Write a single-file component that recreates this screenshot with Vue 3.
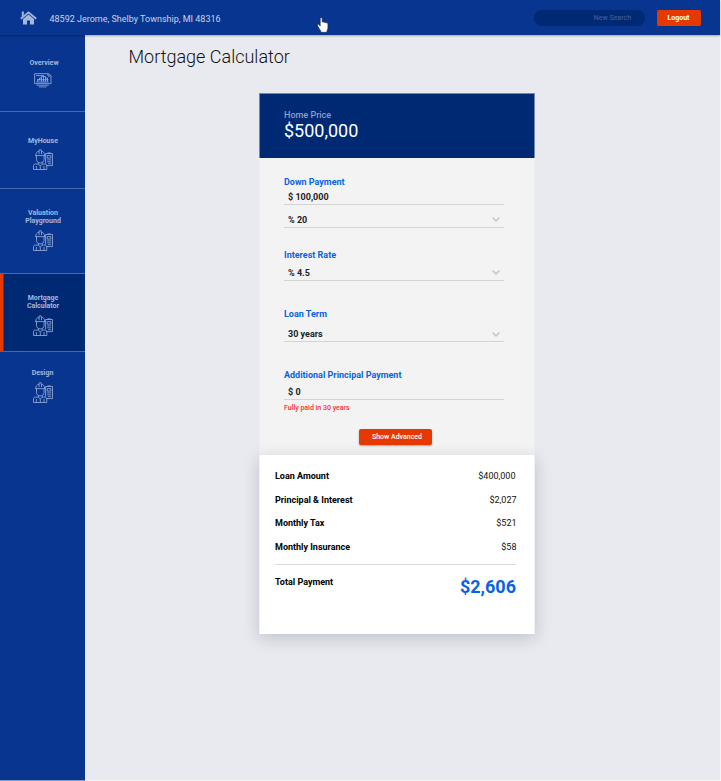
<script setup>
const navItems = [
  { key: 'overview', lines: ['Overview'], icon: 'plan' },
  { key: 'myhouse', lines: ['MyHouse'], icon: 'worker' },
  { key: 'valuation', lines: ['Valuation', 'Playground'], icon: 'worker' },
  { key: 'mortgage', lines: ['Mortgage', 'Calculator'], icon: 'worker', active: true },
  { key: 'design', lines: ['Design'], icon: 'worker' },
]

const summary = [
  { key: 'loan', label: 'Loan Amount', value: '$400,000' },
  { key: 'interest', label: 'Principal & Interest', value: '$2,027' },
  { key: 'tax', label: 'Monthly Tax', value: '$521' },
  { key: 'insurance', label: 'Monthly Insurance', value: '$58' },
]
</script>

<template>
  <div class="page">
    <header class="topbar">
      <svg class="home" viewBox="0 0 17 14">
        <path d="M0.2 7.1 8.5 0.3 16.8 7.1 15.6 8.4 8.5 2.6 1.4 8.4z" />
        <path d="M1.8.6h2v3.500l-2 1.600z" />
        <path d="M8.5 3.6 14 8.1v5.5h-4V9.4H7v4.2H3V8.1z" />
      </svg>
      <span class="address">48592 Jerome, Shelby Township, MI 48316</span>
      <div class="search">New Search</div>
      <button class="logout">Logout</button>
      <svg class="pointer" viewBox="0 0 12 16">
        <path
          d="M3.2 9V1.7C3.2.3 5.2.3 5.2 1.7v3.4c.7-.5 1.6-.3 1.9.4.7-.4 1.5-.1 1.8.5 1-.4 2 .1 2 1.3v3.4c0 1.5-.9 2.4-1.1 4.6H4.1C3.8 13.5 1.6 11.2.6 8.6.2 7.3 1.5 6.7 2.2 7.7z"
        />
      </svg>
    </header>

    <div class="body">
      <nav class="sidebar">
        <a
          v-for="item in navItems"
          :key="item.key"
          class="nav-item"
          :class="[item.key, { active: item.active }]"
        >
          <span class="nav-label">
            <span v-for="line in item.lines" :key="line">{{ line }}</span>
          </span>
          <svg v-if="item.icon === 'plan'" class="plan-icon" viewBox="0 0 18 15">
            <path d="M.6 10.600V.700h13.800l2.600 2v7.900z" />
            <path d="M14 .8v2.300h2.500M2 2.600h8M2.400 9h12.300M3.500 8.500V6.800h2V5h2v3.500M7.500 5V3.500h4v5M9.500 3.500v5M11.500 5h2v3.500M3 6.800h11.500" />
            <path d="M2.5 12.200h12.300M4.800 13.900h7.800" />
          </svg>
          <svg v-else class="worker-icon" viewBox="0 0 20 21">
            <path d="M2 6.600h10.500M2.800 6.500C2.800 3.900 4.100 2.500 6 2.100L6.400.8h1.700l.3 1.300c1.900.4 3.300 1.800 3.300 4.400M6.100 2v3.200M8.500 2v3.200" />
            <path d="M3.500 6.800v3.600c0 2.100 1.600 3.500 3.800 3.500s3.800-1.400 3.800-3.500V6.800" />
            <path d="M5.400 13.500v1.600H2.300C1 15.100.5 15.900.5 17v3.500h13.300V17c0-1.100-.5-1.900-1.800-1.900H9.200v-1.600M5.400 15.100l1.900 2 1.900-2M7.300 17.100v3.400M3.400 17v3.500M11 17v3.500" />
            <path d="M12.600 4.500h6.900v12.100h-6.300M12.600 4.500v10M14.500 3.900h3.200M14.200 6.600h3.600v2.500h-3.600zM14.200 10.900h4M14.200 12.800h4M15 14.700h3.200" />
          </svg>
        </a>
      </nav>

      <main class="content">
        <h1 class="title">Mortgage Calculator</h1>

        <section class="card">
          <div class="price">
            <div class="price-label">Home Price</div>
            <div class="price-value">$500,000</div>
          </div>

          <div class="form">
            <div class="group down">
              <label class="label">Down Payment</label>
              <div class="field">$ 100,000</div>
              <div class="field second">
                <span>% 20</span>
                <svg class="chevron" viewBox="0 0 8 5"><path d="M.6.6 4 4 7.4.6" /></svg>
              </div>
            </div>
            <div class="group rate">
              <label class="label">Interest Rate</label>
              <div class="field">
                <span>% 4.5</span>
                <svg class="chevron" viewBox="0 0 8 5"><path d="M.6.6 4 4 7.4.6" /></svg>
              </div>
            </div>
            <div class="group term">
              <label class="label">Loan Term</label>
              <div class="field">
                <span>30 years</span>
                <svg class="chevron" viewBox="0 0 8 5"><path d="M.6.6 4 4 7.4.6" /></svg>
              </div>
            </div>
            <div class="group extra">
              <label class="label">Additional Principal Payment</label>
              <div class="field">$ 0</div>
              <div class="note">Fully paid in 30 years</div>
            </div>
            <button class="advanced">Show Advanced</button>
          </div>

          <div class="summary">
            <div v-for="row in summary" :key="row.key" class="row">
              <span class="row-label">{{ row.label }}</span>
              <span class="row-value" :class="row.key">{{ row.value }}</span>
            </div>
            <div class="total">
              <span class="row-label">Total Payment</span>
              <span class="total-value">$2,606</span>
            </div>
          </div>
        </section>
      </main>
    </div>
  </div>
</template>

<style>
body {
  background: #f5f6f9;
}
</style>

<style scoped>
* {
  box-sizing: border-box;
}
.page {
  width: 720px;
  height: 781px;
  display: flex;
  flex-direction: column;
  font-family: Roboto, 'Liberation Sans', sans-serif;
  background: #e9eaef;
}
button {
  border: 0;
  padding: 0;
  font-family: inherit;
  color: #fff;
  background: #e63900;
  border-radius: 2px;
}
.topbar {
  position: relative;
  z-index: 2;
  flex: none;
  height: 35px;
  display: flex;
  align-items: center;
  padding-left: 20px;
  background: #08358f;
  box-shadow: 0 1px 2px rgba(0, 0, 0, 0.3);
}
.home {
  width: 17px;
  height: 14px;
  fill: #a5b7dc;
}
.address {
  margin: 2px 0 0 12.5px;
  font-size: 9px;
  line-height: 14px;
  white-space: nowrap;
  color: #c8d3ea;
}
.search {
  width: 111px;
  height: 16px;
  margin-left: auto;
  padding-right: 14px;
  border-radius: 8px;
  background: #002974;
  color: #4563a0;
  font-size: 7px;
  line-height: 16px;
  text-align: right;
}
.logout {
  width: 44px;
  height: 16px;
  margin: 0 19.5px 0 11.5px;
  font-size: 7px;
  font-weight: 700;
  line-height: 16px;
}
.pointer {
  position: absolute;
  left: 317px;
  top: 17px;
  width: 12px;
  height: 16px;
  fill: #fff;
  stroke: #17274f;
  stroke-width: 0.6;
}
.body {
  flex: 1;
  display: flex;
}
.sidebar {
  width: 85px;
  flex: none;
  background: #08358f;
  border-bottom: 1px solid #839ac8;
}
.nav-item {
  display: flex;
  flex-direction: column;
  align-items: center;
  border-bottom: 1px solid #4769ac;
}
.nav-label {
  display: flex;
  flex-direction: column;
  align-items: center;
  font-size: 7px;
  font-weight: 700;
  line-height: 8px;
  color: #a5b7dc;
}
.overview {
  height: 77px;
  padding: 24px 0 0 3px;
}
.myhouse {
  height: 77px;
  padding: 25px 0 0 1px;
}
.valuation {
  height: 85px;
  padding: 20px 0 0 1px;
}
.mortgage {
  height: 78px;
  padding: 20px 0 0 1px;
}
.design {
  padding-top: 17px;
  border-bottom: 0;
}
.active {
  background: #002974;
  box-shadow: inset 3.5px 0 #e63900;
}
.plan-icon,
.worker-icon {
  fill: none;
  stroke: #a5b7dc;
}
.plan-icon {
  width: 18px;
  height: 15px;
  margin: 6px 2px 0 0;
  stroke-width: 0.75;
}
.worker-icon {
  width: 20px;
  height: 21px;
  margin-top: 5px;
  stroke-width: 0.75;
}
.myhouse .worker-icon {
  margin-top: 4px;
}
.design .worker-icon {
  margin: 5px 0 0 1px;
}
.content {
  flex: 1;
  border-bottom: 1px solid #f4f5f7;
}
.title {
  margin: 8px 0 0 43.5px;
  font-size: 18px;
  font-weight: 300;
  line-height: 27px;
  color: #111;
}
.card {
  width: 276px;
  margin: 23px 0 0 174px;
}
.price {
  height: 65px;
  padding: 15px 0 0 24px;
  background: #002974;
  border: 1px solid #7485ae;
  border-bottom: 0;
}
.price-label {
  font-size: 9px;
  font-weight: 500;
  line-height: 12px;
  color: #8f9fc5;
}
.price-value {
  font-size: 18px;
  line-height: 20px;
  color: #fff;
}
.form {
  height: 297px;
  padding: 17px 30px 0 24px;
  background: #f3f3f3;
  border: solid #eeeff1;
  border-width: 0 1px;
}
.group {
  display: flex;
  flex-direction: column;
}
.down {
  height: 73.5px;
}
.rate {
  height: 59.5px;
}
.term {
  height: 61px;
}
.extra {
  height: 59px;
}
.label {
  font-size: 9px;
  font-weight: 700;
  line-height: 13px;
  color: #0863e3;
}
.down .label {
  padding-top: 1px;
  margin-bottom: -1px;
}
.field {
  display: flex;
  align-items: center;
  justify-content: space-between;
  height: 17px;
  padding: 1px 4px 0;
  border-bottom: 1px solid #d4d4d4;
  font-size: 9px;
  font-weight: 700;
  color: #222;
}
.second {
  height: 23px;
  padding-top: 7px;
}
.rate .field {
  height: 19px;
  padding-top: 4px;
}
.term .field {
  height: 21px;
  padding-top: 6px;
}
.extra .field {
  height: 18px;
  padding-top: 2px;
}
.chevron {
  width: 8px;
  height: 5px;
  fill: none;
  stroke: #c4c4c4;
  stroke-width: 1.4;
}
.note {
  margin-top: 3px;
  font-size: 7px;
  font-weight: 500;
  line-height: 10px;
  color: #fa3030;
}
.advanced {
  display: block;
  width: 73px;
  height: 16px;
  margin: 0.5px 0 0 75px;
  padding-left: 3px;
  font-size: 7px;
  font-weight: 500;
  line-height: 16px;
  box-shadow: 0 1px 2px rgba(0, 0, 0, 0.3);
}
.summary {
  height: 179px;
  padding: 10px 18px 0 15px;
  background: #fff;
  border: solid #f0f1f4;
  border-width: 0 1px;
  box-shadow: 0 4px 16px rgba(20, 25, 60, 0.2);
  color: #111;
}
.row {
  display: flex;
  justify-content: space-between;
  height: 23.5px;
  font-size: 9px;
  line-height: 23px;
}
.row-value {
  margin-right: -0.5px;
}
.row-value.loan {
  margin-right: 0.5px;
}
.row-label {
  font-size: 9px;
  font-weight: 700;
  color: #000;
}
.total {
  display: flex;
  justify-content: space-between;
  margin-top: 5px;
  border-top: 1px solid #d8dadd;
  line-height: 34px;
}
.total-value {
  font-size: 18px;
  font-weight: 700;
  line-height: 44px;
  color: #0863e3;
}
</style>
